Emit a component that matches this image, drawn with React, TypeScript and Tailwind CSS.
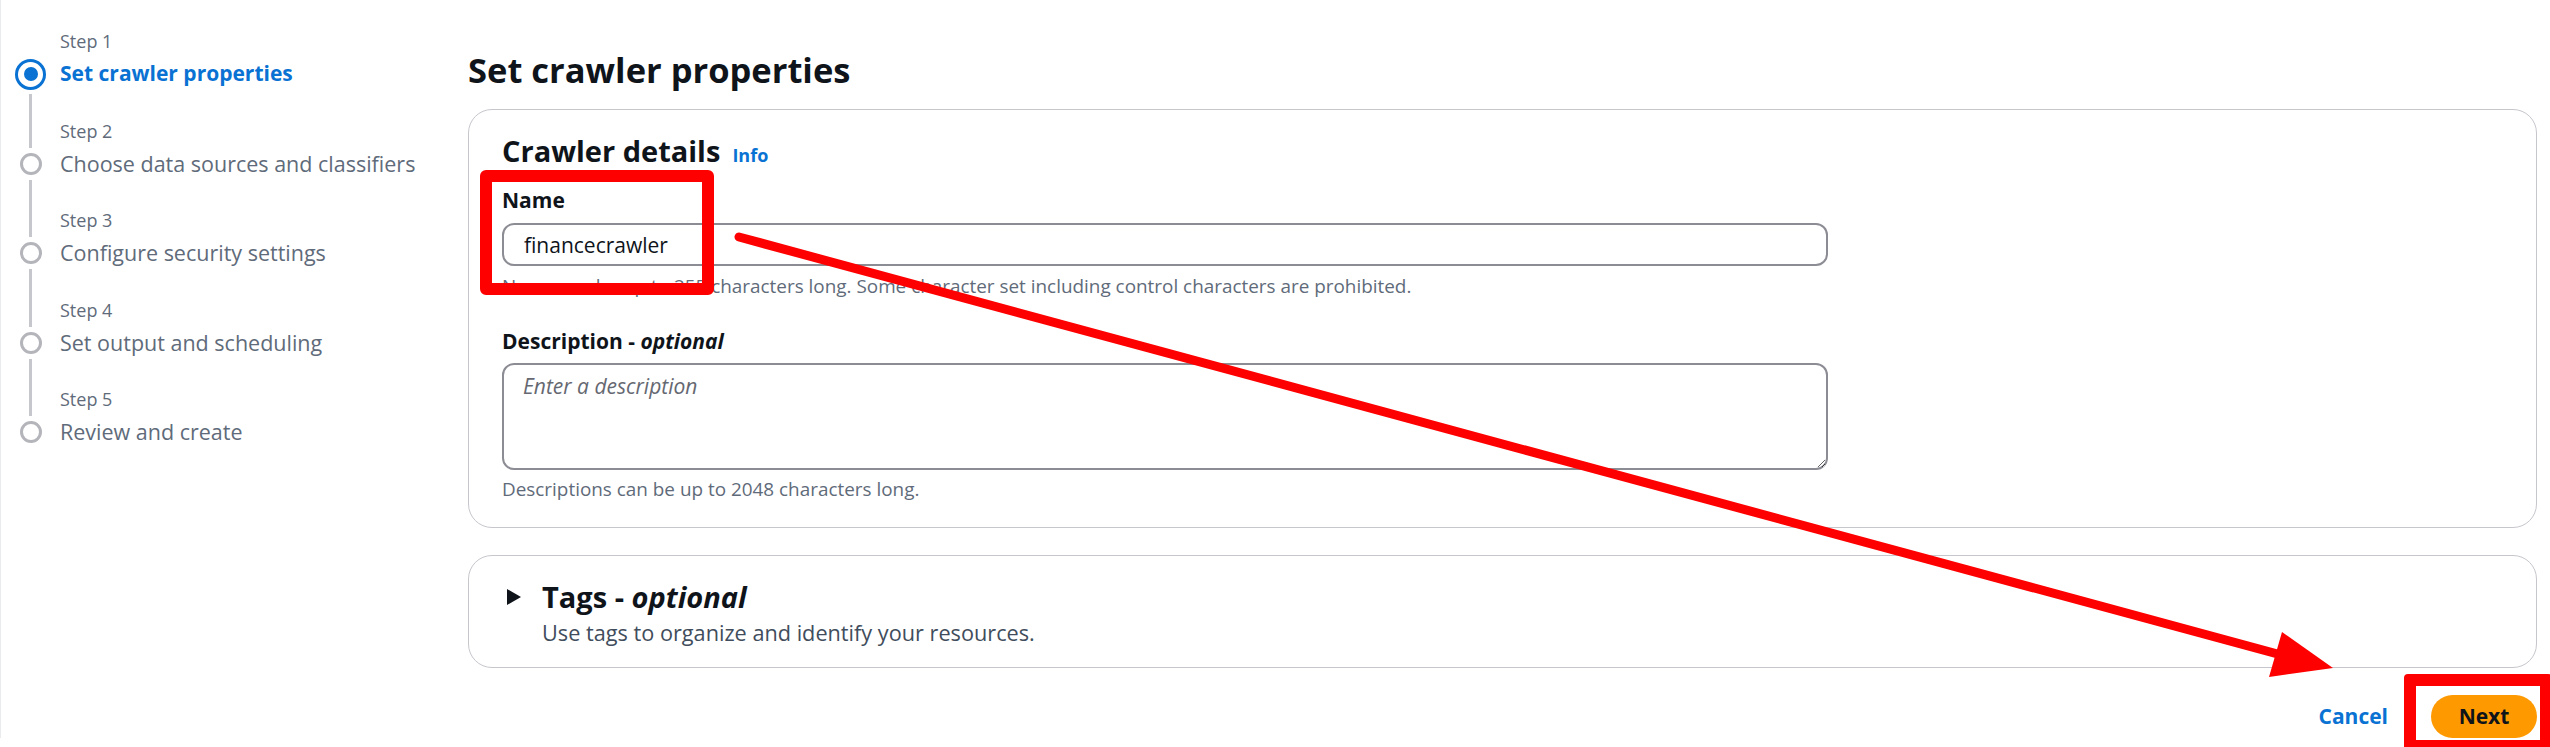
import React from 'react';

const steps = [
  { label: 'Step 1', title: 'Set crawler properties' },
  { label: 'Step 2', title: 'Choose data sources and classifiers' },
  { label: 'Step 3', title: 'Configure security settings' },
  { label: 'Step 4', title: 'Set output and scheduling' },
  { label: 'Step 5', title: 'Review and create' },
];

const StepNav: React.FC = () => {
  return (
    <nav className="w-[468px] shrink-0 pt-[26px] border-l border-[#e9ebed]">
      {steps.map((step, i) => {
        const active = i === 0;
        const last = i === steps.length - 1;
        return (
          <div
            key={step.label}
            className={`grid grid-cols-[59px_1fr] ${last ? 'grid-rows-[32px_32px]' : 'grid-rows-[32px_32px_25.5px]'}`}
          >
            {/* connector from the step above */}
            <div className="flex justify-center">
              {i > 0 && <div className="w-[3px] h-full bg-[#c6c6cd]" />}
            </div>
            <div className="text-[18px] leading-[30px] text-[#5f6b7a]">{step.label}</div>

            <div className="flex items-center justify-center">
              {active ? (
                <div className="w-[31px] h-[31px] rounded-full border-[3px] border-[#0972d3] flex items-center justify-center">
                  <div className="w-[14px] h-[14px] rounded-full bg-[#0972d3]" />
                </div>
              ) : (
                <div className="w-[22px] h-[22px] rounded-full border-[3px] border-[#b4b4bb] bg-white" />
              )}
            </div>
            <div
              className={`leading-[31px] whitespace-nowrap ${
                active ? 'text-[21px] font-bold text-[#0972d3]' : 'text-[21.5px] text-[#5f6b7a]'
              }`}
            >
              {step.title}
            </div>

            {!last && (
              <>
                <div className="flex justify-center">
                  <div className={`w-[3px] bg-[#c6c6cd] ${active ? 'mt-[4px] h-[21.5px]' : 'h-full'}`} />
                </div>
                <div />
              </>
            )}
          </div>
        );
      })}
    </nav>
  );
};

const TriangleRight: React.FC = () => (
  <svg width="16" height="18" viewBox="0 0 16 18" className="ml-[4px] shrink-0">
    <path d="M1 1 L15 9 L1 17 Z" fill="#0f141a" />
  </svg>
);

export default function App() {
  return (
    <div className="relative w-[2550px] h-[747px] overflow-hidden bg-white font-['Open_Sans',sans-serif] text-[#0f141a]">
      <div className="flex">
        <StepNav />

        <main className="flex-1 pt-[46px] pr-[13px]">
          <h1 className="text-[34.5px] leading-[48px] font-bold mb-[15px]">Set crawler properties</h1>

          {/* Crawler details container */}
          <section className="border border-[#c6c6cd] rounded-[24px] pt-[23px] px-[33px] pb-[24px]">
            <div className="flex items-baseline gap-[12px]">
              <h2 className="text-[29px] leading-[36px] font-bold">Crawler details</h2>
              <a href="#" className="text-[18px] font-bold text-[#0972d3]">Info</a>
            </div>

            <label className="block mt-[16px] text-[21px] leading-[30px] font-bold">Name</label>
            <input
              readOnly
              value="financecrawler"
              className="mt-[8px] block w-[1326px] h-[43px] border-2 border-[#8c8c94] rounded-[12px] px-[20px] text-[21px] text-[#0f141a] outline-none"
            />
            <p className="mt-[7px] text-[18.9px] leading-[27px] text-[#5f6b7a]">
              Name can be up to 255 characters long. Some character set including control characters are prohibited.
            </p>

            <label className="block mt-[26px] text-[21px] leading-[30px] font-bold">
              Description - <i>optional</i>
            </label>
            <textarea
              placeholder="Enter a description"
              className="mt-[7px] block w-[1326px] h-[107px] border-2 border-[#8c8c94] rounded-[12px] px-[19px] pt-[6px] text-[21px] leading-[30px] outline-none placeholder:italic placeholder:text-[#656871]"
            />
            <p className="mt-[6px] text-[18.9px] leading-[27px] text-[#5f6b7a]">
              Descriptions can be up to 2048 characters long.
            </p>
          </section>

          {/* Tags expandable container */}
          <section className="mt-[27px] border border-[#c6c6cd] rounded-[24px] pt-[23px] px-[33px] pb-[19px]">
            <div className="flex items-center gap-[20px]">
              <TriangleRight />
              <h2 className="text-[29px] leading-[36px] font-bold">
                Tags - <i>optional</i>
              </h2>
            </div>
            <p className="mt-[3px] pl-[40px] text-[21.7px] leading-[30px] text-[#414d5c]">
              Use tags to organize and identify your resources.
            </p>
          </section>

          <div className="mt-[27px] flex justify-end items-center gap-[43px]">
            <button className="text-[21px] font-bold text-[#0972d3]">Cancel</button>
            <button className="w-[106px] h-[43px] rounded-full bg-[#ff9900] text-[21px] font-bold text-[#0f141a]">
              Next
            </button>
          </div>
        </main>
      </div>

      {/* red annotations drawn over the page */}
      <div className="absolute left-[480px] top-[170px] w-[234px] h-[125px] border-[12px] border-[#ff0000] rounded-[6px] pointer-events-none" />
      <div className="absolute left-[2404px] top-[674px] w-[148px] h-[78px] border-[12px] border-[#ff0000] rounded-[4px] pointer-events-none" />
      <svg
        className="absolute left-0 top-0 pointer-events-none"
        width="2550"
        height="747"
        viewBox="0 0 2550 747"
      >
        <line x1="739" y1="237" x2="2285" y2="656" stroke="#ff0000" strokeWidth="9" strokeLinecap="round" />
        <polygon points="2282,632 2333,668 2269,677" fill="#ff0000" />
      </svg>
    </div>
  );
}
